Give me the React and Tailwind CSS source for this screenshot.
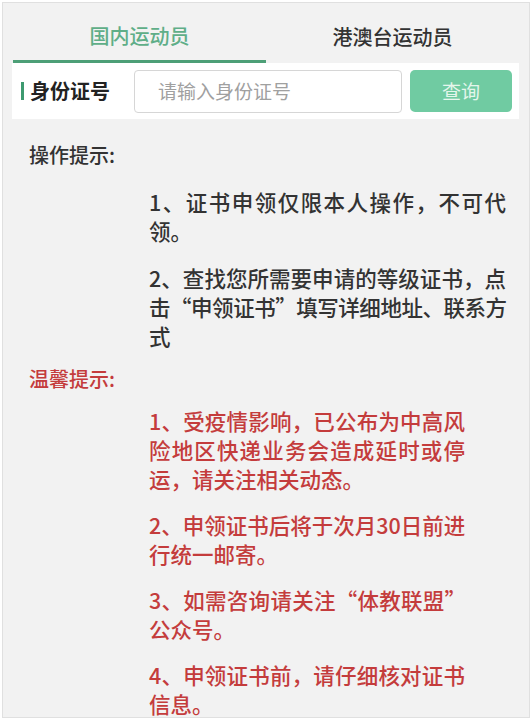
import React from "react";

const FONT = "font-['Noto_Sans_CJK_SC','Noto_Sans',sans-serif]";

const opTips = [
    ["1、证书申领仅限本人操作，不可代", "领。"],
    ["2、查找您所需要申请的等级证书，点", "击“申领证书”填写详细地址、联系方", "式"],
];

const warmTips = [
    ["1、受疫情影响，已公布为中高风", "险地区快递业务会造成延时或停", "运，请关注相关动态。"],
    ["2、申领证书后将于次月30日前进", "行统一邮寄。"],
    ["3、如需咨询请关注“体教联盟”", "公众号。"],
    ["4、申领证书前，请仔细核对证书", "信息。"],
];

// each item is given as its rendered lines, so the wrapping matches the screenshot
const TipItem = ({ lines }) => (
    <div>
        {lines.map((line, i) => (
            <div
                key={i}
                className={
                    i < lines.length - 1
                        ? `whitespace-nowrap text-justify [text-align-last:justify] ${line.includes("“") ? "tracking-[-1.1px]" : ""}`
                        : "whitespace-nowrap text-left"
                }
            >
                {line}
            </div>
        ))}
    </div>
);

export default function App() {
    return (
        <div lang="zh-CN" className={`${FONT} h-[720px] w-[532px] overflow-hidden bg-white p-[2px]`}>
            <div className="h-full border border-[#e0e0e0] bg-[#f2f2f2]">
                {/* tabs */}
                <div className="flex px-[10px]">
                    <div className="flex h-[60px] flex-1 items-center justify-center border-b-[3px] border-[#4d9f77] pt-[8px] text-[20px] font-medium text-[#5fae88]">
                        国内运动员
                    </div>
                    <div className="flex h-[60px] flex-1 items-center justify-center pt-[8px] text-[20px] font-medium text-[#333]">
                        港澳台运动员
                    </div>
                </div>

                {/* search */}
                <div className="ml-[9px] flex h-[56px] w-[507px] items-center bg-white pl-[9px]">
                    <span className="h-[18px] w-[3px] bg-[#3d9a70]" />
                    <span className="ml-[6px] w-[104px] text-[20px] font-bold text-[#222]">身份证号</span>
                    <div className="flex h-[43px] w-[268px] items-center rounded-[4px] border border-[#d6d6d6] bg-white pl-[23px] text-[19px] text-[#a0a0a0]">
                        请输入身份证号
                    </div>
                    <button className="ml-[8px] flex h-[42px] w-[102px] items-center justify-center rounded-[5px] bg-[#70cba2] text-[19px] text-[#e4f6ec]">
                        查询
                    </button>
                </div>

                {/* tips */}
                <div className="pl-[26px] leading-[29px] font-medium">
                    <div className="mt-[21px] text-[20px] text-[#333]">操作提示:</div>
                    <div className="ml-[120px] mt-[18px] flex w-[357px] flex-col gap-[18px] text-[21.5px] text-[#333]">
                        {opTips.map((lines, i) => (
                            <TipItem key={i} lines={lines} />
                        ))}
                    </div>

                    <div className="mt-[14px] text-[20px] text-[#c43c3c]">温馨提示:</div>
                    <div className="ml-[120px] mt-[13px] flex w-[316px] flex-col gap-[17px] text-[21.5px] text-[#c43c3c]">
                        {warmTips.map((lines, i) => (
                            <TipItem key={i} lines={lines} />
                        ))}
                    </div>
                </div>
            </div>
        </div>
    );
}
